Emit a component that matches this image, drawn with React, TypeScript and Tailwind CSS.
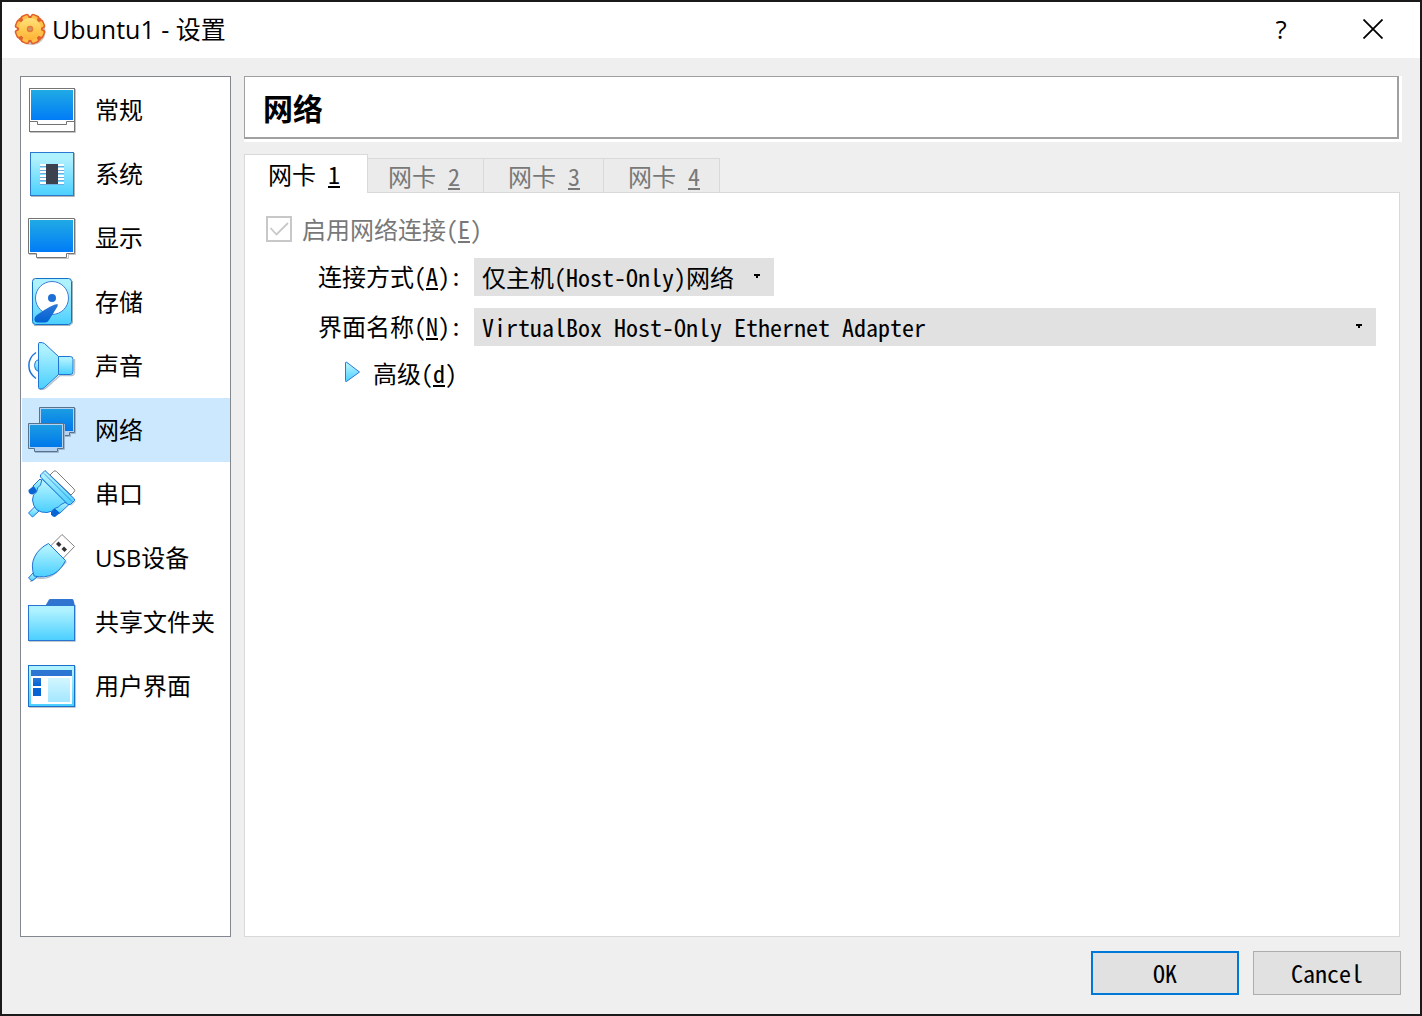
import { useState } from "react";
import type { ReactNode } from "react";
import clsx from "clsx";

interface Category {
  id: string;
  label: string;
  icon: ReactNode;
}

const UI_FONT = "font-['Open_Sans','Noto_Sans_CJK_SC',sans-serif]";
const FORM_FONT = "font-['Noto_Sans_Mono_CJK_SC','Liberation_Mono','Noto_Sans_CJK_SC',monospace] font-light";

// Gradients shared by all the category icons
function IconDefs() {
  return (
    <svg width="0" height="0" className="absolute" aria-hidden="true">
      <defs>
        <linearGradient id="screen" x1="0" y1="0" x2="0" y2="1">
          <stop offset="0" stopColor="#20aae4" />
          <stop offset="1" stopColor="#007cf8" />
        </linearGradient>
        <linearGradient id="screenActive" x1="0" y1="0" x2="0" y2="1">
          <stop offset="0" stopColor="#1b9ce2" />
          <stop offset="1" stopColor="#0078ec" />
        </linearGradient>
        <linearGradient id="sky" x1="0" y1="0" x2="0" y2="1">
          <stop offset="0.15" stopColor="#aef1ff" />
          <stop offset="1" stopColor="#4acfff" />
        </linearGradient>
        <linearGradient id="navy" x1="0" y1="0" x2="0" y2="1">
          <stop offset="0" stopColor="#2f78d6" />
          <stop offset="1" stopColor="#0062d4" />
        </linearGradient>
        <linearGradient id="pane" x1="0" y1="0" x2="0" y2="1">
          <stop offset="0" stopColor="#d2f6ff" />
          <stop offset="1" stopColor="#a4e7ff" />
        </linearGradient>
        <linearGradient id="gear" x1="0" y1="0" x2="0" y2="1">
          <stop offset="0" stopColor="#ffe27c" />
          <stop offset="0.6" stopColor="#ffc64c" />
          <stop offset="1" stopColor="#ffb238" />
        </linearGradient>
      </defs>
    </svg>
  );
}

function Icon({ children }: { children: ReactNode }) {
  return (
    <svg width="48" height="48" viewBox="0 0 48 48" fill="none" className="shrink-0" aria-hidden="true">
      {children}
    </svg>
  );
}

const generalIcon = (
  <Icon>
    <path d="M2 46.5H47.5V3" stroke="#c4c4c4" />
    <rect x="1.5" y="2.5" width="45" height="43" fill="#fff" stroke="#747474" />
    <rect x="3" y="4" width="42" height="30" fill="url(#screen)" />
    <path d="M1.5 35.5H9.5V38.5H38.5V35.5H46.5" stroke="#747474" />
  </Icon>
);

const systemIcon = (
  <Icon>
    <path d="M3 46.5H46.5V3" stroke="#b4b4b4" />
    <rect x="2.5" y="2.5" width="43" height="43" fill="url(#sky)" stroke="#2b78d0" />
    {[14, 18, 21, 25, 28, 32].map((y) => (
      <g key={y}>
        <rect x="12" y={y} width="24" height="2" fill="#fff" />
        <rect x="12" y={y + 2} width="24" height="1" fill="#6cabdf" />
      </g>
    ))}
    <rect x="18" y="14" width="12" height="20" fill="#3b414d" />
  </Icon>
);

const displayIcon = (
  <Icon>
    <path d="M1 40.5H8M40 40.5H47.5V5M9 44.5H40.5V41" stroke="#c4c4c4" />
    <path d="M.5 4.5H46.5V39.5H38.5V43.5H8.5V39.5H.5Z" fill="#fff" stroke="#747474" />
    <rect x="2" y="6" width="43" height="32" fill="url(#screen)" />
  </Icon>
);

const storageIcon = (
  <Icon>
    <path d="M6 47.5H42L44.500 45V3" stroke="#a8b4bc" />
    <rect x="4.5" y=".5" width="39" height="46" rx="3" fill="url(#sky)" stroke="#1570c8" />
    <circle cx="24" cy="20" r="16.5" fill="#fff" stroke="#3a7fd5" />
    <circle cx="24" cy="20" r="4" fill="#1d6fd6" />
    <path d="M29.500 26Q24 26.500 9.500 36.500Q6 39 6.500 42Q7 44.500 10 44.500H17Q19.500 44.500 21 42L29.500 28.500Q30 26 29.500 26Z" fill="url(#navy)" />
  </Icon>
);

const audioIcon = (
  <Icon>
    <path d="M12 47.500Q15 48 18 46L32 33.500H44Q46.500 33 46.500 30V17" stroke="#b5c3cc" strokeWidth="1.500" />
    <path d="M8 10.500C-1.500 17 -1.500 30 8 36.500" stroke="#1f74d6" strokeWidth="1.500" />
    <path d="M10.500 17.500Q6.500 18.500 6.500 23.500T10.500 29.500Z" fill="url(#sky)" stroke="#1f74d6" />
    <path d="M30.500 14.500H42.500Q45 14.500 45 17.500V29.500Q45 32.500 42.500 32.500H30.500Z" fill="url(#sky)" stroke="#1f74d6" />
    <path d="M10.500 1.500Q10.500 .5 12 .5Q15 .5 16.500 1.500L30.500 14.500V32.500L16.500 45.500Q15 47 12 47Q10.500 47 10.500 45.500Z" fill="url(#sky)" stroke="#1f74d6" />
  </Icon>
);

const networkIcon = (
  <Icon>
    <path d="M37 30.500H42.500V27.500H47.500V2" stroke="#9fb6cc" />
    <path d="M11.500 1.500H46.500V26.500H41.500V29.500H11.500Z" fill="#b4d2f2" stroke="#56728f" />
    <rect x="13" y="3" width="32" height="22" fill="url(#screenActive)" />
    <path d="M7 46.500H30.500V43.500H36.500V18" stroke="#9fb6cc" />
    <path d="M.5 17.500H35.500V42.500H29.500V45.500H6.500V42.500H.5Z" fill="#b4d2f2" stroke="#56728f" />
    <rect x="2" y="19" width="32" height="22" fill="url(#screenActive)" />
  </Icon>
);

const serialIcon = (
  <Icon>
    <path d="M22 5L25.500 1.500Q27 0 28.500 1.500L46 19Q47.500 20.500 46 22L43 25Z" fill="#fff" stroke="#7d7d7d" />
    <path d="M12 9L5 16L9.500 22L17 14Z" fill="url(#sky)" stroke="#1f74d6" />
    <path d="M5.500 16L.5 20Q0 22 2 24L4.500 24.500L9.500 22Z" fill="#0864d2" />
    <path d="M34 31L26 38L31.500 43.500L41 34.500Z" fill="url(#sky)" stroke="#1f74d6" />
    <path d="M26 38L23 41.500L23 44.500Q24.500 47 27 47L32 43Z" fill="#0864d2" />
    <path d="M6.500 37L.5 43L4.500 47L11 41Z" fill="url(#sky)" stroke="#1f74d6" />
    <path d="M14 9L12.500 15Q9 17 8.500 22Q4.500 24 4.500 30Q5 36 8.500 39.500Q13 43 19 42.500Q24 42 26.500 38.500Q31 37.500 33 34.500L38 32Z" fill="url(#sky)" stroke="#1f74d6" />
    <path d="M17 .5L12.500 5V7L40 34.500L42.500 34.500L46.500 30.500V29Z" fill="url(#sky)" stroke="#1f74d6" />
    <path d="M16 3.500L44 31.500" stroke="#1f74d6" strokeWidth=".7" />
    <path d="M43 35.500L47.500 31" stroke="#b5b5b5" />
  </Icon>
);

const usbIcon = (
  <Icon>
    <path d="M34 .5L46.500 12.500L34 25.500L21.500 13Z" fill="#fff" stroke="#808080" />
    <path d="M30.500 7.500L33.500 10.500L31 13L28 10Z" fill="#333" />
    <path d="M36 12.500L39 15.500L36.500 18L33.500 15Z" fill="#333" />
    <path d="M2 48L8 43.500Q18 46.500 28 39L38.500 27.500" stroke="#b8c4cc" strokeWidth="1.500" />
    <path d="M5 39L.5 44L4 47L9 43Z" fill="url(#sky)" stroke="#1f74d6" />
    <path d="M20.500 9.500L37.500 26.500Q33 36 25.500 40Q17 44.500 6 42Q2.500 31 6.500 23Q11 14 20.500 9.500Z" fill="url(#sky)" stroke="#1f74d6" />
  </Icon>
);

const folderIcon = (
  <Icon>
    <path d="M1 43.500H47.500V7" stroke="#c0c8cc" />
    <path d="M17.500 7.500L21 1.500Q21.500 1 22.500 1H44Q45 1 45.500 2L47 8Z" fill="#2f74d0" />
    <rect x=".5" y="7.500" width="46" height="35" fill="url(#sky)" stroke="#2876d2" />
  </Icon>
);

const interfaceIcon = (
  <Icon>
    <path d="M1 45.500H47.500V4" stroke="#c0c8cc" />
    <rect x=".5" y="3.500" width="46" height="41" fill="url(#sky)" stroke="#1b70c8" />
    <rect x="3" y="8" width="41" height="34" fill="#fff" />
    <rect x="3" y="8" width="41" height="6" fill="#2d75d3" />
    <rect x="5" y="16" width="8" height="8" fill="url(#navy)" />
    <rect x="5" y="26" width="8" height="8" fill="#0864d2" />
    <rect x="20" y="16" width="22" height="24" fill="url(#pane)" />
  </Icon>
);

const CATEGORIES: Category[] = [
  { id: "general", label: "常规", icon: generalIcon },
  { id: "system", label: "系统", icon: systemIcon },
  { id: "display", label: "显示", icon: displayIcon },
  { id: "storage", label: "存储", icon: storageIcon },
  { id: "audio", label: "声音", icon: audioIcon },
  { id: "network", label: "网络", icon: networkIcon },
  { id: "serial", label: "串口", icon: serialIcon },
  { id: "usb", label: "USB设备", icon: usbIcon },
  { id: "shared", label: "共享文件夹", icon: folderIcon },
  { id: "interface", label: "用户界面", icon: interfaceIcon },
];

const ADAPTERS = [1, 2, 3, 4];

function GearIcon() {
  return (
    <svg width="32" height="32" viewBox="0 0 32 32" fill="none" aria-hidden="true">
      <circle cx="18" cy="18.500" r="13.500" fill="#a89890" opacity="0.6" />
      <rect x="3" y="3" width="26" height="26" rx="8" fill="#e2602a" />
      {[22.5, 67.5, 112.5, 157.5].map((angle) => (
        <rect key={angle} x="11.500" y=".5" width="9" height="31" rx="2.500" fill="#e2602a" transform={`rotate(${angle} 16 16)`} />
      ))}
      {[22.5, 67.5, 112.5, 157.5].map((angle) => (
        <rect key={angle} x="13" y="2" width="6" height="28" rx="1.500" fill="#ffc04a" transform={`rotate(${angle} 16 16)`} />
      ))}
      <circle cx="16" cy="16" r="11" fill="url(#gear)" />
      <circle cx="16" cy="16" r="2.500" fill="#c99a72" stroke="#e57a35" strokeWidth="1.500" />
    </svg>
  );
}

function TitleBar() {
  return (
    <header className="flex h-14 items-center bg-white pr-px pb-[2px] pl-3">
      <GearIcon />
      <h1 className="ml-[6px] flex-1 text-[25px] leading-8">Ubuntu1 - 设置</h1>
      <button type="button" aria-label="帮助" className="flex h-12 w-[92px] items-center justify-center text-[26px] leading-8">
        ?
      </button>
      <button type="button" aria-label="关闭" className="flex h-12 w-[92px] items-center justify-center">
        <svg width="20" height="20" viewBox="0 0 20 20" fill="none" aria-hidden="true">
          <path d="M.5.5L19.500 19.500M19.500.5L.5 19.500" stroke="#000" strokeWidth="1.800" />
        </svg>
      </button>
    </header>
  );
}

function Sidebar({ active, onSelect }: { active: string; onSelect: (id: string) => void }) {
  return (
    <nav className="w-[211px] shrink-0 border border-[#828790] bg-white pt-px pl-px">
      {CATEGORIES.map((c) => (
        <button
          key={c.id}
          type="button"
          onClick={() => onSelect(c.id)}
          className={clsx("flex h-16 w-full items-center gap-[19px] pl-[6px] text-left text-[24px] leading-8", c.id === active && "bg-[#cce8ff]")}
        >
          {c.icon}
          <span>{c.label}</span>
        </button>
      ))}
    </nav>
  );
}

// Underlined accelerator key inside a label
function Key({ children }: { children: ReactNode }) {
  return <u className="decoration-2 underline-offset-2">{children}</u>;
}

function SelectBox({ id, className, children }: { id: string; className?: string; children: ReactNode }) {
  return (
    <div className={clsx("relative", className)}>
      <select id={id} className="h-[38px] w-full appearance-none bg-[#e1e1e1] pr-10 pl-2 text-[24px]">
        {children}
      </select>
      <svg width="6" height="4" viewBox="0 0 6 4" className="pointer-events-none absolute top-4 right-[14px]" aria-hidden="true">
        <path d="M0 0H6V2H4V4H2V2H0Z" fill="#000" />
      </svg>
    </div>
  );
}

function NetworkPage() {
  const [tab, setTab] = useState(1);

  return (
    <>
      <div role="tablist" className="z-10 mt-3 flex h-[39px] items-start text-[24px] leading-8">
        {ADAPTERS.map((n) => (
          <button
            key={n}
            type="button"
            role="tab"
            aria-selected={n === tab}
            onClick={() => setTab(n)}
            className={clsx(
              "border-t border-r border-[#d9d9d9] whitespace-pre last:pr-[19px]",
              n === tab ? "relative z-10 -mr-1 h-[39px] border-l bg-white pr-[27px] pb-px pl-[23px]" : "mt-1 h-[34px] bg-[#ebebeb] pr-[23px] pl-6 text-[#787878]"
            )}
          >
            网卡 <Key>{n}</Key>
          </button>
        ))}
      </div>
      <div role="tabpanel" className="-mt-px mr-[2px] flex-1 border border-[#d9d9d9] bg-white pt-[23px] pr-[23px] pl-[21px]">
        <div className="flex h-[26px] items-center gap-[10px] text-[#787878]">
          <span className="relative size-[26px]">
            <input id="enable" type="checkbox" checked disabled className="block size-[26px] appearance-none border-2 border-[#c8c8c8] bg-white" />
            <svg width="26" height="26" viewBox="0 0 26 26" fill="none" className="pointer-events-none absolute inset-0" aria-hidden="true">
              <path d="M4.500 12L10.500 18.500L22 7" stroke="#c8c8c8" strokeWidth="1.800" />
            </svg>
          </span>
          <label htmlFor="enable" className="text-[24px] leading-8">
            启用网络连接(<Key>E</Key>)
          </label>
        </div>
        <div className="mt-4 ml-[52px] grid grid-cols-[144px_1fr] items-center gap-3 text-[24px] leading-8">
          <label htmlFor="attached" className="pb-[2px] whitespace-nowrap">
            连接方式(<Key>A</Key>):
          </label>
          <SelectBox id="attached" className="w-[300px]">
            <option>仅主机(Host-Only)网络</option>
          </SelectBox>
          <label htmlFor="name" className="pb-[2px] whitespace-nowrap">
            界面名称(<Key>N</Key>):
          </label>
          <SelectBox id="name">
            <option>VirtualBox Host-Only Ethernet Adapter</option>
          </SelectBox>
        </div>
        <button type="button" className="mt-[11px] ml-[78px] flex h-8 items-center gap-3 text-[24px] leading-8">
          <svg width="17" height="22" viewBox="0 0 17 22" fill="none" className="mb-[2px]" aria-hidden="true">
            <path d="M1.500 1.500Q2 .5 3 1.500L15.500 11L2.500 20.500Q1.500 21 1.500 19.500Z" fill="url(#sky)" stroke="#2b78d6" />
          </svg>
          <span>
            高级(<Key>d</Key>)
          </span>
        </button>
      </div>
    </>
  );
}

export default function App() {
  const [active, setActive] = useState("network");
  const title = CATEGORIES.find((c) => c.id === active)?.label;

  return (
    <div className={clsx("flex min-h-screen flex-col border-2 border-[#1a1a1a] bg-[#efefef] text-black", UI_FONT)}>
      <IconDefs />
      <TitleBar />
      <div className="flex flex-1 gap-[13px] pt-[18px] pr-[18px] pl-[18px]">
        <Sidebar active={active} onSelect={setActive} />
        <main className={clsx("flex min-w-0 flex-1 flex-col", FORM_FONT)}>
          <div className="border-r-3 border-b-3 border-white">
            <h2 className="flex h-[63px] items-center border-t border-r-2 border-b-2 border-l border-[#a0a0a0] bg-white pl-[18px] text-[30px] leading-10 font-bold">
              {title}
            </h2>
          </div>
          <NetworkPage />
        </main>
      </div>
      <footer className={clsx("flex justify-end gap-[14px] pt-[14px] pr-[19px] pb-[19px] text-[24px] leading-8", FORM_FONT)}>
        <button type="button" className="h-11 w-[148px] border-2 border-[#0078d7] bg-[#e1e1e1]">
          OK
        </button>
        <button type="button" className="h-11 w-[148px] border border-[#adadad] bg-[#e1e1e1]">
          Cancel
        </button>
      </footer>
    </div>
  );
}
